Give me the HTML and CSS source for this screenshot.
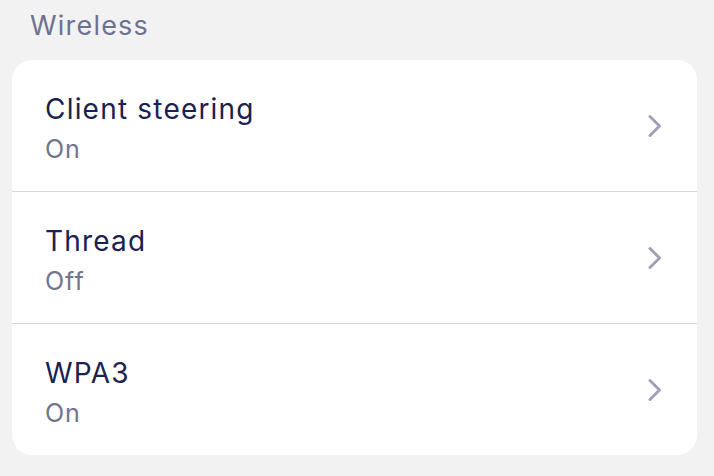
FILE: index.html
```html
<!DOCTYPE html>
<html>
<head>
<meta charset="utf-8">
<link rel="stylesheet" href="styles.css">
</head>
<body>
<div class="page">
  <h2 class="section-title">Wireless</h2>
  <div class="card">
    <div class="row">
      <div class="text">
        <div class="title">Client steering</div>
        <div class="value">On</div>
      </div>
      <svg class="chevron" width="16" height="24" viewBox="0 0 16 24"><path d="M3 2.5 L12.5 12 L3 21.5" fill="none" stroke="#9fa1b6" stroke-width="3" stroke-linecap="round" stroke-linejoin="round"/></svg>
    </div>
    <div class="row">
      <div class="text">
        <div class="title">Thread</div>
        <div class="value">Off</div>
      </div>
      <svg class="chevron" width="16" height="24" viewBox="0 0 16 24"><path d="M3 2.5 L12.5 12 L3 21.5" fill="none" stroke="#9fa1b6" stroke-width="3" stroke-linecap="round" stroke-linejoin="round"/></svg>
    </div>
    <div class="row">
      <div class="text">
        <div class="title">WPA3</div>
        <div class="value">On</div>
      </div>
      <svg class="chevron" width="16" height="24" viewBox="0 0 16 24"><path d="M3 2.5 L12.5 12 L3 21.5" fill="none" stroke="#9fa1b6" stroke-width="3" stroke-linecap="round" stroke-linejoin="round"/></svg>
    </div>
  </div>
</div>
</body>
</html>
```
FILE: styles.css
```css
html, body {
  margin: 0;
  padding: 0;
  background: #f2f2f2;
  font-family: "Inter", "Noto Sans", sans-serif;
}
.page {
  padding: 6px 17px 0 12px;
}
.section-title {
  margin: 0 0 0 18px;
  font-weight: 400;
  font-size: 27px;
  letter-spacing: 1.2px;
  line-height: 40px;
  color: #6d7191;
  height: 54px;
}
.card {
  background: #fff;
  border-radius: 20px;
  display: flex;
  flex-direction: column;
}
.row {
  height: 131px;
  display: flex;
  align-items: center;
  justify-content: space-between;
  padding: 0 34px 0 33px;
  border-top: 1px solid #d6d6dd;
}
.row:first-child {
  border-top: none;
}
.text {
  display: flex;
  flex-direction: column;
  padding-top: 7px;
}
.title {
  font-size: 28px;
  letter-spacing: 1.2px;
  line-height: 34px;
  margin-bottom: 6px;
  color: #1b2150;
}
.value {
  font-size: 25px;
  letter-spacing: 1px;
  line-height: 34px;
  color: #71748f;
}
.chevron {
  display: block;
}
```
